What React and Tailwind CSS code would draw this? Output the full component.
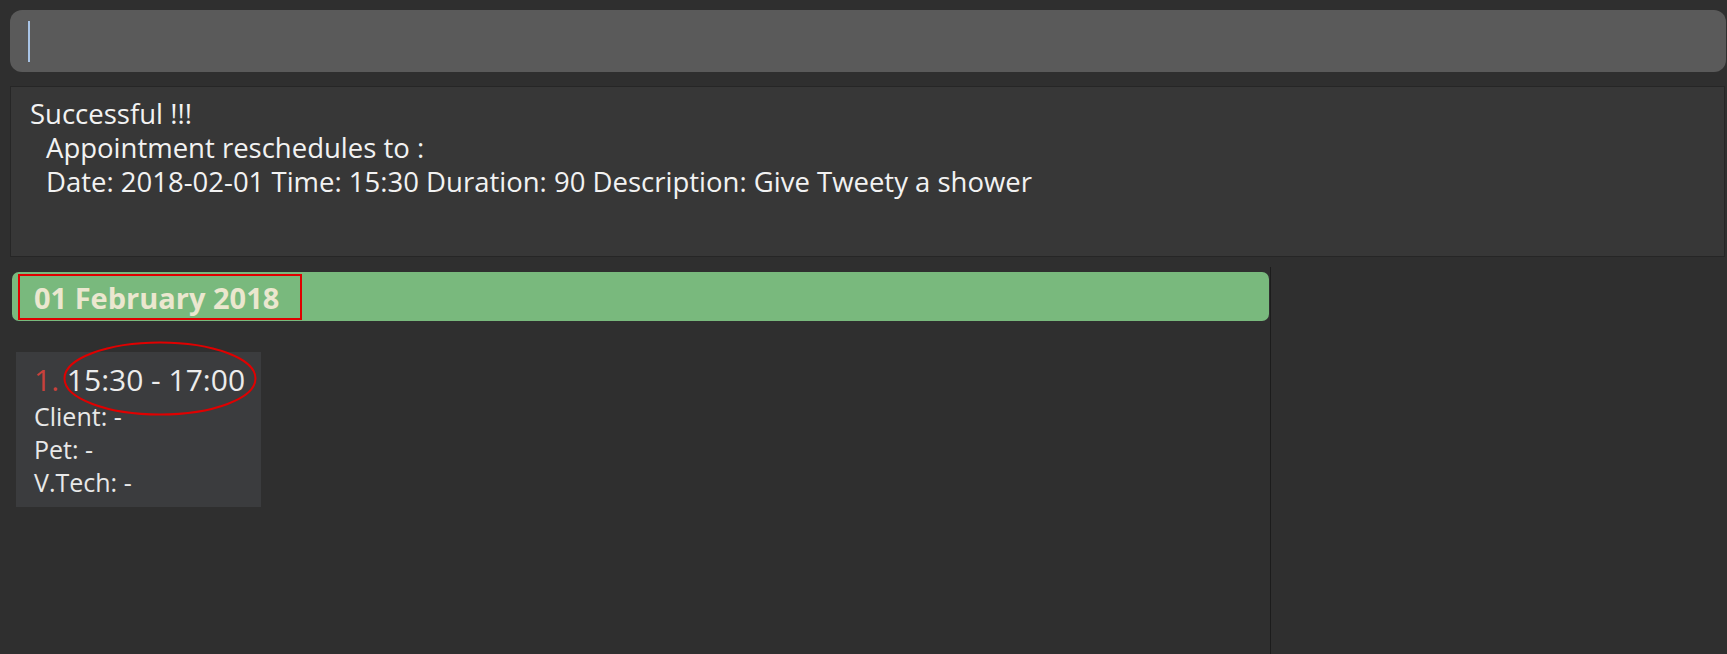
import React from "react";

const FONT = { fontFamily: '"Open Sans", "Noto Sans", sans-serif' };

function CommandBox() {
  return (
    <div className="ml-[10px] mr-[1px] mt-[10px] h-[62px] rounded-[12px] bg-[#5a5a5a] flex items-center pl-[18px]">
      <div className="w-[2px] h-[41px] bg-[#a9c4e6]" />
    </div>
  );
}

function ResultBox() {
  return (
    <div className="ml-[10px] mr-[2px] mt-[14px] h-[171px] border border-[#262626] bg-[#373737] pl-[19px] pt-[10px] text-[27.5px] leading-[34px] text-[#f2f2f2] whitespace-pre">
      <div>Successful !!!</div>
      <div className="pl-[16px]">Appointment reschedules to :</div>
      <div className="pl-[16px]">Date: 2018-02-01 Time: 15:30 Duration: 90 Description: Give Tweety a shower</div>
    </div>
  );
}

function AppointmentCard() {
  return (
    <div className="relative mt-[31px] ml-[6px] w-[245px] h-[155px] bg-[#3b3c3e] pl-[18px] pt-[8px]">
      <div className="text-[30px] leading-[40px] text-[#ececec]">
        <span className="text-[#c8413b]">1. </span>15:30 - 17:00
      </div>
      <div className="text-[25px] leading-[33px] text-[#e8e8e8]">
        <div>Client: -</div>
        <div>Pet: -</div>
        <div>V.Tech: -</div>
      </div>
      {/* annotation ellipse */}
      <svg className="absolute left-[47px] top-[-11px]" width="194" height="75" viewBox="0 0 194 75">
        <ellipse cx="97" cy="37.5" rx="95.5" ry="36" fill="none" stroke="#e00000" strokeWidth="2" />
      </svg>
    </div>
  );
}

export default function App() {
  return (
    <div className="w-full h-[654px] bg-[#2f2f2f] overflow-hidden" style={FONT}>
      <CommandBox />
      <ResultBox />
      <div className="flex mt-[10px] h-[387px]">
        <div className="ml-[10px] w-[1261px] border-r border-[#1c1c1c]">
          <div className="relative mt-[5px] ml-[2px] mr-[1px] h-[49px] rounded-[7px] bg-[#79b97d] flex items-center pl-[22px] pt-[2px]">
            <span className="text-[29px] font-bold text-[#ebe7cf] leading-none">01 February 2018</span>
            {/* annotation box */}
            <div className="absolute left-[6px] top-[2px] w-[284px] h-[46px] border-2 border-[#e00000]" />
          </div>
          <AppointmentCard />
        </div>
        <div className="flex-1" />
      </div>
    </div>
  );
}
